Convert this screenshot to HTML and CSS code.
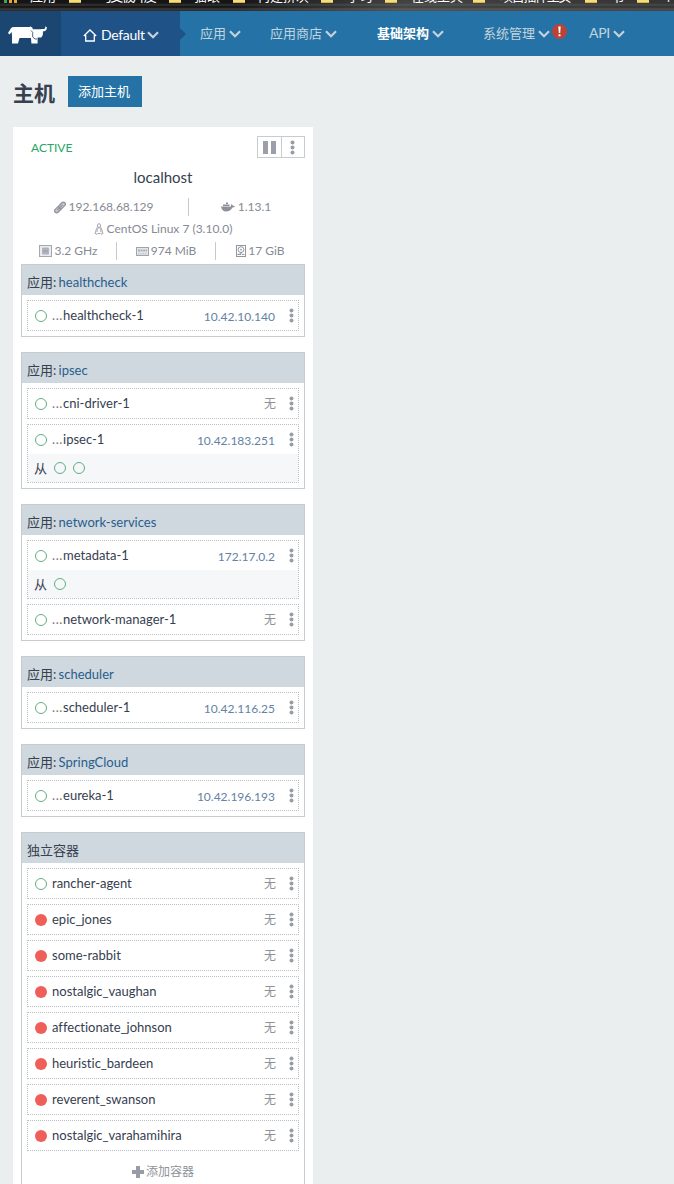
FILE: index.html
```html
<!DOCTYPE html>
<html lang="zh">
<head>
<meta charset="utf-8">
<title>主机</title>
<link rel="stylesheet" href="styles.css">
</head>
<body>
<svg class="defs" width="0" height="0" aria-hidden="true">
  <symbol id="chev" viewBox="0 0 12 8"><path d="M1 1.3 6 6.3 11 1.3" fill="none" stroke="currentColor" stroke-width="2.2"/></symbol>
  <symbol id="dots" viewBox="0 0 5 15"><circle cx="2.5" cy="2.5" r="2"/><circle cx="2.5" cy="7.5" r="2"/><circle cx="2.5" cy="12.5" r="2"/></symbol>
  <symbol id="ring" viewBox="0 0 12 12"><circle cx="6" cy="6" r="5.5" fill="none" stroke="#5fae83"/></symbol>
  <symbol id="disc" viewBox="0 0 12 12"><circle cx="6" cy="6" r="6" fill="#ef5f5a"/></symbol>
</svg>
<div class="bookmarks">
  <span class="bars"><i></i><i></i><i></i></span>
  <span class="bm b1">应用</span><i class="folder f1"></i>
  <span class="bm b2">马支板片皮</span><i class="folder f2"></i>
  <span class="bm b3">猫眼</span><i class="folder f3"></i>
  <span class="bm b4">构建拼灰</span><i class="folder f4"></i>
  <span class="bm b5">学习</span><i class="folder f5"></i>
  <span class="bm b6">在线工具</span><i class="folder f6"></i>
  <span class="bm b7">项目插件主页</span><i class="folder f7"></i>
  <span class="bm b8">书</span><i class="folder f8"></i>
  <span class="bm b9">个人</span>
</div>
<nav class="nav">
  <a class="logo"><svg width="40" height="20" viewBox="0 0 40 20"><path fill="#fff" d="M3 2.2Q4 1 6 1H22V.2L24.2 1.5 25 3.3H33V3H36.4Q37.5 2 37.4.2L39 1.5Q39 4 36.5 5.2H35L34.8 9 33.3 11.5H29.6V17.6H23.4L23 12H11.5L10 17.6H4V9L3.6 6 1.5 8.5 0 7Z"/><path d="M23 4.5 24.7 6.3V11L27 13H29" fill="none" stroke="#1b4672" stroke-width=".8"/></svg></a>
  <a class="env"><svg width="14" height="13" viewBox="0 0 14 13"><path d="M.8 7 7 1 13.2 7M2.7 6V12H11.3V6" fill="none" stroke="#fff" stroke-width="1.3"/></svg><span class="env-name">Default</span><svg class="chev"><use href="#chev"/></svg></a>
  <a class="item n1"><span>应用</span><svg class="chev"><use href="#chev"/></svg></a>
  <a class="item n2"><span>应用商店</span><svg class="chev"><use href="#chev"/></svg></a>
  <a class="item n3 current"><span>基础架构</span><svg class="chev"><use href="#chev"/></svg></a>
  <a class="item n4"><span>系统管理</span><svg class="chev"><use href="#chev"/></svg><svg class="alert" width="15" height="15" viewBox="0 0 15 15"><circle cx="7.5" cy="7.5" r="7.5" fill="#bc4238"/><path d="M6.3 2.5h2.4L8.2 9H6.8ZM6.5 10.2h2v2H6.5Z" fill="#fff"/></svg></a>
  <a class="item n5"><span class="api">API</span><svg class="chev"><use href="#chev"/></svg></a>
</nav>
<header class="title"><h1>主机</h1><button class="add-host">添加主机</button></header>
<main class="card">
  <div class="card-top"><span class="state">ACTIVE</span>
    <div class="actions"><span><svg width="13" height="13" viewBox="0 0 13 13"><path d="M0 0h5v13H0ZM8 0h5v13H8Z" fill="#9a9fa9"/></svg></span><span><svg class="dots"><use href="#dots"/></svg></span></div>
  </div>
  <h2 class="host">localhost</h2>
  <div class="info r1">
    <span class="fact"><svg width="12" height="13" viewBox="0 0 13 13"><g transform="rotate(-45 6.5 6.5)" fill="#c3c6cc" stroke="#8e929a" stroke-width="1.3"><rect x="-.8" y="4.3" width="8.2" height="4.4" rx="2.2"/><rect x="5.6" y="4.3" width="8.2" height="4.4" rx="2.2"/><path d="M2.5 6.5h8"/></g></svg><span>192.168.68.129</span></span>
    <span class="fact"><svg width="14" height="10" viewBox="0 0 14 10"><path fill="#8b9099" d="M0 4.5h10Q9.7 2.8 10.7 2L12 3.7 14 4Q13.4 5.6 11.4 5.6 9.5 9.5 5 9.5 1 9.5 0 4.5ZM2 2.5h6.5v1.6H2ZM5 .5h2v1.6H5Z"/></svg><span>1.13.1</span></span>
  </div>
  <div class="info r2">
    <span class="fact"><svg width="10" height="12" viewBox="0 0 10 12"><path d="M3.5 3Q3.4.6 5 .6T6.5 3Q6.5 4.4 7.5 6T8.3 9.2L9.2 10.2 7 11.4 6.2 10.5H3.8L3 11.4.8 10.2 1.7 9.2Q1.5 7.5 2.5 6T3.5 3ZM4 4.2H6M3 9Q3 6 4.7 4.5M7 9.3Q7 6 5.5 4.5" fill="none" stroke="#8d929b" stroke-width=".8"/></svg><span>CentOS Linux 7 (3.10.0)</span></span>
  </div>
  <div class="info r3">
    <span class="fact"><svg width="13" height="12" viewBox="0 0 13 12"><rect x=".5" y=".5" width="12" height="11" fill="#e9ebef" stroke="#a4a8b0"/><path d="M3.5 3h6v6h-6ZM3 4.5h7M3 7.5h7" fill="#a3a6ae" stroke="#b3b6be"/></svg><span>3.2 GHz</span></span>
    <span class="fact"><svg width="13" height="9" viewBox="0 0 13 9"><rect x=".5" y=".5" width="12" height="8" fill="#e4e6ea" stroke="#a0a4ac"/><path d="M2 3.5h9" stroke="#a9adb5" stroke-width="2" stroke-dasharray="2 .6"/><path d="M2 6.8h9" stroke="#b0b4bb" stroke-dasharray="1 .7"/></svg><span>974 MiB</span></span>
    <span class="fact"><svg width="10" height="12" viewBox="0 0 10 12"><rect x=".5" y=".5" width="9" height="11" fill="none" stroke="#92969e"/><circle cx="5" cy="4.6" r="2.9" fill="none" stroke="#92969e"/><circle cx="5" cy="4.6" r=".9" fill="#92969e"/><path d="M1.5 9.3h3l1-2M6 9.5h2.5" stroke="#92969e" stroke-width="1.2" fill="none"/></svg><span>17 GiB</span></span>
  </div>

  <section class="group"><h3>应用: <a>healthcheck</a></h3>
    <div class="box"><div class="row"><svg class="dot"><use href="#ring"/></svg><span class="name"><i>...</i>healthcheck-1</span><span class="ip">10.42.10.140</span><svg class="dots"><use href="#dots"/></svg></div></div>
  </section>
  <section class="group"><h3>应用: <a>ipsec</a></h3>
    <div class="box"><div class="row"><svg class="dot"><use href="#ring"/></svg><span class="name"><i>...</i>cni-driver-1</span><span class="none">无</span><svg class="dots"><use href="#dots"/></svg></div></div>
    <div class="box"><div class="row"><svg class="dot"><use href="#ring"/></svg><span class="name"><i>...</i>ipsec-1</span><span class="ip">10.42.183.251</span><svg class="dots"><use href="#dots"/></svg></div>
      <div class="side"><span>从</span><svg class="dot"><use href="#ring"/></svg><svg class="dot"><use href="#ring"/></svg></div></div>
  </section>
  <section class="group"><h3>应用: <a>network-services</a></h3>
    <div class="box"><div class="row"><svg class="dot"><use href="#ring"/></svg><span class="name"><i>...</i>metadata-1</span><span class="ip">172.17.0.2</span><svg class="dots"><use href="#dots"/></svg></div>
      <div class="side"><span>从</span><svg class="dot"><use href="#ring"/></svg></div></div>
    <div class="box"><div class="row"><svg class="dot"><use href="#ring"/></svg><span class="name"><i>...</i>network-manager-1</span><span class="none">无</span><svg class="dots"><use href="#dots"/></svg></div></div>
  </section>
  <section class="group"><h3>应用: <a>scheduler</a></h3>
    <div class="box"><div class="row"><svg class="dot"><use href="#ring"/></svg><span class="name"><i>...</i>scheduler-1</span><span class="ip">10.42.116.25</span><svg class="dots"><use href="#dots"/></svg></div></div>
  </section>
  <section class="group"><h3>应用: <a>SpringCloud</a></h3>
    <div class="box"><div class="row"><svg class="dot"><use href="#ring"/></svg><span class="name"><i>...</i>eureka-1</span><span class="ip">10.42.196.193</span><svg class="dots"><use href="#dots"/></svg></div></div>
  </section>
  <section class="group"><h3>独立容器</h3>
    <div class="box"><div class="row"><svg class="dot"><use href="#ring"/></svg><span class="name">rancher-agent</span><span class="none">无</span><svg class="dots"><use href="#dots"/></svg></div></div>
    <div class="box"><div class="row"><svg class="dot"><use href="#disc"/></svg><span class="name">epic_jones</span><span class="none">无</span><svg class="dots"><use href="#dots"/></svg></div></div>
    <div class="box"><div class="row"><svg class="dot"><use href="#disc"/></svg><span class="name">some-rabbit</span><span class="none">无</span><svg class="dots"><use href="#dots"/></svg></div></div>
    <div class="box"><div class="row"><svg class="dot"><use href="#disc"/></svg><span class="name">nostalgic_vaughan</span><span class="none">无</span><svg class="dots"><use href="#dots"/></svg></div></div>
    <div class="box"><div class="row"><svg class="dot"><use href="#disc"/></svg><span class="name">affectionate_johnson</span><span class="none">无</span><svg class="dots"><use href="#dots"/></svg></div></div>
    <div class="box"><div class="row"><svg class="dot"><use href="#disc"/></svg><span class="name">heuristic_bardeen</span><span class="none">无</span><svg class="dots"><use href="#dots"/></svg></div></div>
    <div class="box"><div class="row"><svg class="dot"><use href="#disc"/></svg><span class="name">reverent_swanson</span><span class="none">无</span><svg class="dots"><use href="#dots"/></svg></div></div>
    <div class="box"><div class="row"><svg class="dot"><use href="#disc"/></svg><span class="name">nostalgic_varahamihira</span><span class="none">无</span><svg class="dots"><use href="#dots"/></svg></div></div>
    <div class="add"><svg width="12" height="12" viewBox="0 0 12 12"><path d="M4 0h4v4h4v4H8v4H4V8H0V4h4Z" fill="#989ca6"/></svg><span>添加容器</span></div>
  </section>
</main>
</body>
</html>
```

FILE: styles.css
```css
* { box-sizing: border-box; }
html, body { height: 1184px; overflow: hidden; }
body { margin: 0; background: #eaeeef; color: #36404f; font: 13px/20px Lato, "Noto Sans CJK SC", sans-serif; font-variant-ligatures: none; }
svg { display: block; flex: none; }
.defs { position: absolute; }
i { font-style: normal; }

/* bookmarks strip, only its lower edge is in view */
.bookmarks { position: relative; height: 11px; overflow: hidden; background: linear-gradient(90deg, transparent 35%, rgba(150,150,150,.35) 60%, rgba(110,110,110,.35)), linear-gradient(#141414 0, #161616 3px, #333 5px, #101010 7px, #3c3c3c 9px, #282828 11px); }
.bm { position: absolute; top: -12px; font-size: 13px; line-height: 17px; color: #fff; white-space: nowrap; }
.b1 { left: 30px; } .b2 { left: 99px; } .b3 { left: 194px; } .b4 { left: 257px; } .b5 { left: 347px; }
.b6 { left: 411px; } .b7 { left: 500px; } .b8 { left: 611px; } .b9 { left: 662px; }
.b2 { letter-spacing: -1.8px; } .b7 { letter-spacing: -1.3px; }
.folder { position: absolute; top: 0; width: 12px; height: 3px; background: #f7dc7c; border-bottom: 1px solid #d9b545; }
.f1 { left: 69px; } .f2 { left: 169px; } .f3 { left: 233px; } .f4 { left: 321px; }
.f5 { left: 385px; } .f6 { left: 473px; } .f7 { left: 585px; } .f8 { left: 637px; }
.bars { display: flex; gap: 2px; padding-left: 4px; }
.bars i { width: 3px; height: 3px; background: #e8a33a; }
.bars i:first-child { background: #3aa657; }

.nav { display: flex; height: 45px; background: #2573a6; color: #c3d3dd; }
.logo { width: 61px; padding: 15px 0 0 8px; background: #1b4672; }
.env { position: relative; display: flex; align-items: center; width: 119px; padding: 3px 0 0 22px; background: #1f5388; color: #fff; }
.env::after { content: ""; position: absolute; left: 119px; top: 17px; border: 6px solid transparent; border-left-color: #1f5388; border-right: 0; }
.env-name { width: 44px; margin: 0 2px 0 4px; font-size: 14px; letter-spacing: -.3px; }
.chev { width: 12px; height: 8px; color: #c5d2db; }
.item { display: flex; align-items: center; gap: 3px; height: 44px; }
.item .chev { margin-top: 2px; }
.n1 { margin-left: 20px; } .n2 { margin-left: 29px; } .n3 { margin-left: 40px; } .n4 { margin-left: 39px; } .n5 { margin-left: 22px; }
.current span { color: #fff; font-weight: 700; }
.alert { margin: -4px 0 0 -1px; }
.api { font-size: 14px; letter-spacing: -.4px; }

.title { display: flex; height: 71px; padding: 20px 0 0 13px; }
.title h1 { margin: 0 13px 0 0; font-size: 21px; line-height: 33px; }
.add-host { width: 74px; height: 31px; padding: 0 2px 2px 0; border: 0; background: #2573a6; color: #fff; font: inherit; }

.card { width: 300px; height: 1057px; margin-left: 13px; padding: 0 8px; overflow: hidden; background: #fff; }
.card-top { display: flex; justify-content: space-between; height: 37px; padding: 9px 0 0 10px; }
.state { padding-top: 2px; color: #27a567; font-size: 12px; }
.actions { display: flex; width: 48px; height: 22px; border: 1px solid #c7cccf; }
.actions span { display: flex; flex: 1; align-items: center; justify-content: center; }
.actions span + span { border-left: 1px solid #c7cccf; }
.dots { width: 5px; height: 15px; fill: #989da4; }
.host { margin: 0; text-align: center; font-size: 15px; font-weight: 400; line-height: 26px; }
.info { display: flex; height: 22px; color: #858a94; font-size: 12px; line-height: 22px; }
.fact { display: flex; align-items: center; justify-content: center; gap: 3px; height: 18px; margin-top: 2px; white-space: nowrap; }
.r1 { margin-top: 6px; }
.r1 .fact:first-child { width: 168px; gap: 2px; padding-right: 1px; border-right: 1px solid #c5cacd; }
.r1 .fact:last-child { flex: 1; padding-right: 2px; }
.r2 .fact { width: 100%; }
.r3 { height: 24px; }
.r3 .fact { flex: 1; gap: 2px; }
.r3 .fact:nth-child(-n+2) { border-right: 1px solid #c5cacd; }
.r3 .fact:first-child { flex: 0 0 96px; }
.r3 .fact:nth-child(2) { flex: 0 0 99px; }

.group { margin-bottom: 15px; padding-bottom: 5px; border: 1px solid #c6cdd0; }
.group:last-child { height: 400px; }
.group h3 { height: 30px; margin: 0; padding: 3px 0 0 5px; background: #cfd8de; font-size: 13px; font-weight: 400; line-height: 28px; }
.group a { margin-left: -1px; color: #275d8e; }
.box { margin: 5px 5px 0; border: 1px dotted #b9bfc2; }
.row { display: flex; align-items: center; height: 29px; padding: 0 4px 0 7px; }
.row .dots { margin-top: -1px; }
.dot { width: 12px; height: 12px; margin-top: 1px; }
.name { margin: -2px 0 0 5px; flex: 1; white-space: nowrap; }
.name i { color: #777; letter-spacing: .6px; }
.ip, .none { margin: 1px 13px 0 0; font-size: 12px; color: #6382a5; }
.ip { margin-top: 2px; margin-right: 14px; }
.none { margin-top: 0; color: #8e9299; }
.side { display: flex; align-items: center; gap: 7px; height: 28px; padding-left: 6px; background: #f5f7f8; }
.side .dot { margin-top: 0; }
.add { display: flex; justify-content: center; align-items: center; gap: 2px; margin-top: 11px; color: #8e9299; font-size: 12px; }
```
